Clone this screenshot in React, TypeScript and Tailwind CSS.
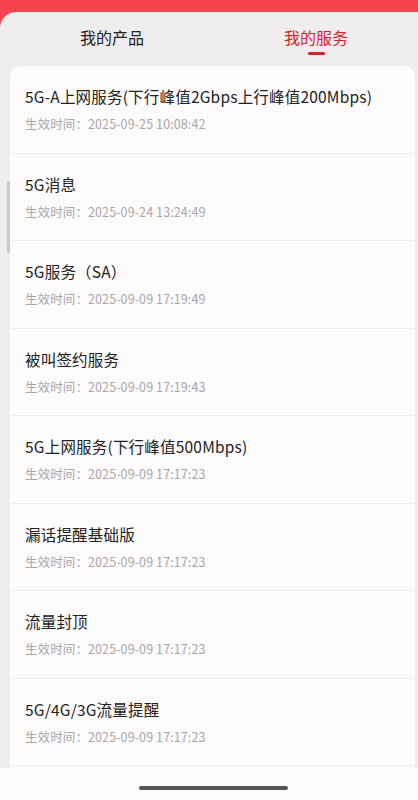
import React from "react";

const services = [
  { name: "5G-A上网服务(下行峰值2Gbps上行峰值200Mbps)", time: "2025-09-25 10:08:42" },
  { name: "5G消息", time: "2025-09-24 13:24:49" },
  { name: "5G服务（SA）", time: "2025-09-09 17:19:49" },
  { name: "被叫签约服务", time: "2025-09-09 17:19:43" },
  { name: "5G上网服务(下行峰值500Mbps)", time: "2025-09-09 17:17:23" },
  { name: "漏话提醒基础版", time: "2025-09-09 17:17:23" },
  { name: "流量封顶", time: "2025-09-09 17:17:23" },
  { name: "5G/4G/3G流量提醒", time: "2025-09-09 17:17:23" },
];

export default function App() {
  return (
    <div
      className="relative h-[800px] w-[418px] overflow-hidden bg-[#f5424f]"
      style={{ fontFamily: '"Noto Sans CJK SC", "Noto Sans", sans-serif' }}
    >
      <div className="mt-[12px] flex h-[756px] flex-col overflow-hidden rounded-tl-[16px] bg-[#efeded]">
        {/* Tabs */}
        <div className="grid h-[54px] shrink-0 grid-cols-2 pl-[10px]">
          <div className="flex flex-col items-center pt-[14px]">
            <span className="text-[16px] leading-[22px] text-[#222]">我的产品</span>
          </div>
          <div className="flex flex-col items-center pt-[14px]">
            <span className="text-[16px] leading-[22px] text-[#d81f2d]">我的服务</span>
            <span className="mt-[4px] h-[3px] w-[17px] rounded-full bg-[#d81f2d]" />
          </div>
        </div>

        {/* List */}
        <div className="ml-[10px] mr-[3px] flex-1 overflow-hidden rounded-t-[10px] bg-[#fdfbfb]">
          {services.map((s) => (
            <div key={s.name + s.time} className="h-[87.5px] border-b border-[#efeded] pl-[15px] pt-[19px]">
              <div className="text-[15.5px] leading-[22px] tracking-[0.2px] text-[#222]">{s.name}</div>
              <div className="mt-[8px] text-[12.5px] leading-[18px] tracking-[0.1px] text-[#a9a7a7]">
                生效时间：{s.time}
              </div>
            </div>
          ))}
        </div>
      </div>

      {/* scrollbar */}
      <div className="absolute left-[7px] top-[181px] h-[72px] w-[3px] rounded-full bg-[#c9c7c7]" />

      {/* bottom nav */}
      <div className="flex h-[32px] items-center justify-center bg-[#fdfbfb] pl-[9px]">
        <div className="mt-[8px] h-[4px] w-[149px] rounded-full bg-[#555]" />
      </div>
    </div>
  );
}
